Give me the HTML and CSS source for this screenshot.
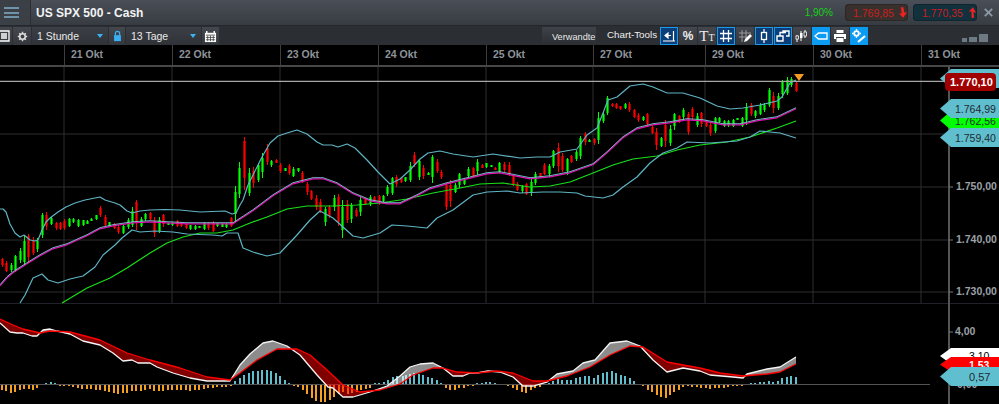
FILE: index.html
```html
<!DOCTYPE html>
<html lang="de">
<head>
<meta charset="utf-8">
<title>US SPX 500 - Cash</title>
<link rel="stylesheet" href="styles.css">
</head>
<body>
<div class="app">
  <header class="topbar">
    <button class="menu" aria-label="Menü"><span></span><span></span><span></span></button>
    <h1 class="title">US SPX 500 - Cash</h1>
    <span class="change">1,90%</span>
    <div class="quote quote-sell">1.769,85
      <svg class="arrow" viewBox="0 0 9 12"><path d="M2 0h3l1 6h3l-4.500 6L0 7l3 0z" fill="#e22"/></svg>
    </div>
    <div class="quote quote-buy">1.770,35
      <svg class="arrow" viewBox="0 0 9 12"><path d="M4 12h3L6 6h3L5.500 0 1 5l3 0z" fill="#e22"/></svg>
    </div>
    <svg class="close" viewBox="0 0 12 12"><path d="M2 2l8 8M10 2l-8 8" stroke="#8b9aa6" stroke-width="2"/></svg>
  </header>

  <nav class="toolbar">
    <button class="tool tool-list">
      <svg viewBox="0 0 12 14"><path d="M-1 2h10v10H-1zM1 5h6M1 7h6M1 9h6" fill="none" stroke="#fff" stroke-width="1.300"/></svg>
    </button>
    <button class="tool tool-gear">
      <svg viewBox="0 0 14 14"><circle cx="7" cy="7" r="3.500" fill="none" stroke="#ddd" stroke-width="2"/><path d="M7 1v2M7 11v2M1 7h2M11 7h2M2.800 2.800l1.400 1.400M9.800 9.800l1.400 1.400M11.200 2.800L9.800 4.200M4.200 9.800l-1.400 1.400" stroke="#ddd" stroke-width="1.800"/></svg>
    </button>
    <div class="select select-time">1 Stunde<i class="caret"></i></div>
    <button class="tool tool-lock">
      <svg viewBox="0 0 12 14"><path d="M3.500 6V4a2.500 2.500 0 015 0v2" fill="none" stroke="#38b0f5" stroke-width="1.400"/><rect x="2" y="6" width="8" height="7" fill="#38b0f5"/></svg>
    </button>
    <div class="select select-range">13 Tage<i class="caret"></i></div>
    <button class="tool tool-cal">
      <svg viewBox="0 0 14 14"><path d="M1 3h12v10H1z" fill="#fff"/><path d="M3 1v3M11 1v3" stroke="#fff" stroke-width="1.500"/><path d="M2 5.500h10M2 8h10M2 10.500h10M4 6v6M7 6v6M10 6v6" stroke="#333" stroke-width=".8"/></svg>
    </button>
    <div class="tab">Verwandte</div>
    <span class="tools-label">Chart-Tools</span>
    <div class="toolset">
      <button class="tool on"><svg viewBox="0 0 14 14"><path d="M1 12h12M11.500 2v10M3 6.500h6M3 6.500l3-2.500v5z" stroke="#fff" fill="#fff" stroke-width="1.200"/></svg></button>
      <button class="tool"><span class="glyph">%</span></button>
      <button class="tool"><span class="glyph glyph-t">T<small>T</small></span></button>
      <button class="tool on"><svg viewBox="0 0 14 14"><path d="M4.500 1v12M9.500 1v12M1 4.500h12M1 9.500h12" stroke="#fff" stroke-width="1.300"/></svg></button>
      <button class="tool"><svg viewBox="0 0 14 14"><path d="M4 1v12M8 1v8M1 4h12M1 8h8" stroke="#999" stroke-width="1"/><path d="M6 13l1-3 5-5 2 2-5 5z" fill="#fff"/></svg></button>
      <button class="tool on"><svg viewBox="0 0 14 14"><path d="M7 0v14" stroke="#fff" stroke-width="1.200"/><rect x="4.500" y="3.500" width="5" height="7" fill="#0b3d78" stroke="#fff" stroke-width="1.300"/></svg></button>
      <button class="tool on"><svg viewBox="0 0 14 14"><path d="M1 7h6v5H1zM4 7V3.500h6M7 4.500V2h6v5h-3" fill="none" stroke="#fff" stroke-width="1.400"/></svg></button>
      <button class="tool"><svg viewBox="0 0 14 14"><path d="M2 13V6M6 12V2M10 9V1" stroke="#fff"/><rect x="1" y="7" width="2.500" height="3" fill="#333" stroke="#fff" stroke-width=".8"/><rect x="5" y="4" width="2.500" height="5" fill="#fff"/><rect x="9" y="3" width="2.500" height="4" fill="#333" stroke="#fff" stroke-width=".8"/></svg></button>
      <button class="tool bright"><svg viewBox="0 0 14 14"><path d="M1 7l3.500-3H13v6H4.500z" fill="none" stroke="#fff" stroke-width="1.300"/></svg></button>
      <button class="tool"><svg viewBox="0 0 14 14"><path d="M3.500 1h7v3h-7zM1 5h12v5h-2V8H3v2H1zM3.500 9h7v4h-7z" fill="#fff"/></svg></button>
      <button class="tool bright"><svg viewBox="0 0 14 14"><circle cx="4.500" cy="4.500" r="2.300" fill="none" stroke="#fff" stroke-width="1.800"/><path d="M4.500 0v1.500M4.500 7.500V9M0 4.500h1.500M7.500 4.500H9" stroke="#fff" stroke-width="1.300"/><path d="M6 13l7-6" stroke="#fff" stroke-width="2.200"/></svg></button>
    </div>
    <div class="winctl"><i class="w1"></i><i class="w2"></i><i class="w3"></i></div>
  </nav>

  <div class="dates">
    <div class="date d0"></div>
    <div class="date d1">21 Okt</div>
    <div class="date d1">22 Okt</div>
    <div class="date d2">23 Okt</div>
    <div class="date d1">24 Okt</div>
    <div class="date d3">25 Okt</div>
    <div class="date d4">27 Okt</div>
    <div class="date d1">29 Okt</div>
    <div class="date d1">30 Okt</div>
    <div class="date d5">31 Okt</div>
  </div>

  <main class="chart">
    <svg class="canvas" viewBox="0 65 999 339" width="999" height="339">
      <g class="grid">
        <path d="M64 67V303M172 67V303M280 67V303M378 67V303M486 67V303M593 67V303M705 67V303M813 67V303M921 67V303"/>
        <path d="M0 134H949M0 187H949M0 240H949M0 292H949"/>
      </g>
      <path class="rule-top" d="M0 66H999"/>
      <path class="rule-mid" d="M0 303.500H999"/>
      <path class="rule-axis" d="M949 66V404"/>
      <path class="ticks" d="M949 187h4M949 240h4M949 292h4M949 332h4"/>
      <g id="candles"></g>
      <g id="bands"></g>
      <path class="last-line" d="M0 81.300H945"/>
      <polygon class="marker" points="794,74 804,74 799,81"/>
      <path class="zero-line" d="M0 384.500H930"/>
      <g id="hist"></g>
      <g id="macd"></g>
      <text class="axis-text" x="956" y="190">1.750,00</text>
      <text class="axis-text" x="956" y="243">1.740,00</text>
      <text class="axis-text" x="956" y="295">1.730,00</text>
      <text class="axis-text" x="955" y="335">4,00</text>
      <text class="axis-text" x="957" y="388">0,00</text>
    </svg>
    <div class="tag tag-blue t-top"></div>
    <div class="tag tag-price">1.770,10</div>
    <div class="tag tag-green t-ma">1.762,56</div>
    <div class="tag tag-blue t-up">1.764,99</div>
    <div class="tag tag-blue t-low">1.759,40</div>
    <div class="tag tag-white t-macd">3,10</div>
    <div class="tag tag-red t-sig">1.53</div>
    <div class="tag tag-blue t-hist">0,57</div>
  </main>
</div>
<script src="chart.js"></script>
</body>
</html>
```
FILE: styles.css
```css
* { box-sizing: border-box; }
html, body { margin: 0; padding: 0; width: 999px; height: 404px; overflow: hidden; background: #000; }
body { font-family: "Liberation Sans", Arial, sans-serif; color: #fff; }
.app { display: flex; flex-direction: column; width: 999px; height: 404px; }
button { margin: 0; padding: 0; border: 0; font: inherit; color: inherit; background: none; }

.topbar { display: flex; align-items: center; height: 26px; flex: none; background: linear-gradient(#4a4f57, #373b42); border-bottom: 1px solid #24272b; }
.menu { display: flex; flex-direction: column; justify-content: center; gap: 2.500px; width: 31px; height: 25px; padding-left: 4px; background: #3b4047; border-right: 1px solid #2a2d32; flex: none; }
.menu span { display: block; width: 15px; height: 2px; background: #6f93a8; }
.title { margin: 0 0 0 5px; font-size: 12px; font-weight: bold; color: #f2f3f4; flex: 1; }
.change { color: #17d117; font-size: 10px; margin-right: 12px; }
.quote { display: flex; align-items: center; gap: 5px; width: 63px; height: 17px; padding-left: 8px; margin-right: 5px; border-radius: 4px; font-size: 10.500px; color: #c82020; }
.quote-sell { background: #38302c; box-shadow: inset 0 0 0 1px #2c2724; }
.quote-buy { width: 64px; padding-left: 9px; background: #13303d; box-shadow: inset 0 0 0 1px #10262f; margin-right: 6px; }
.arrow { width: 8px; height: 11px; }
.close { width: 11px; height: 11px; margin-right: 5px; }

.toolbar { display: flex; align-items: stretch; height: 19px; padding-top: 1px; flex: none; background: #2b2e33; }
.tool { display: flex; align-items: center; justify-content: center; width: 18px; background: linear-gradient(#44484e, #33363b); flex: none; }
.tool svg { width: 14px; height: 14px; }
.tool-list { width: 12px; margin-right: 1px; }
.tool-list svg { width: 12px; }
.tool-gear { margin-right: 1px; }
.tool-gear svg { width: 11px; height: 11px; }
.tool-lock { width: 16px; margin: 0 1px; }
.tool-lock svg { width: 11px; height: 12px; }
.tool-cal { margin-left: 1px; width: 17px; }
.tool-cal svg { width: 13px; height: 13px; }
.select { position: relative; display: flex; align-items: center; padding-left: 5px; font-size: 10.500px; color: #e8e9ea; background: linear-gradient(#3c4046, #2f3237); flex: none; }
.select-time { width: 76px; }
.select-range { width: 75px; }
.caret { position: absolute; right: 5px; top: 7px; width: 0; height: 0; border: 3px solid transparent; border-bottom: 0; border-top: 4px solid #3cb2f2; }
.tab { width: 54px; margin-left: 323px; padding: 5px 0 0 10px; font-size: 9.200px; color: #e8e9ea; white-space: nowrap; background: linear-gradient(#3f4349, #2a2d31); flex: none; }
.tools-label { width: 65px; padding: 2px 0 0 11px; font-size: 9.800px; white-space: nowrap; color: #f0f0f0; flex: none; }
.toolset { display: flex; gap: 1px; margin-left: -1px; flex: none; }
.tool.on { background: #0b3d78; box-shadow: inset 0 0 0 1px #1a9ae8; }
.tool.bright { background: #0c9bf2; }
.glyph { font-size: 12px; font-weight: bold; color: #eee; }
.glyph-t { font-family: "Liberation Serif", serif; font-size: 15px; font-weight: normal; }
.glyph-t small { font-size: 10px; }
.winctl { display: flex; align-items: flex-end; gap: 2px; margin-left: 94px; padding-bottom: 3px; }
.winctl i { display: block; background: #6d7a84; }
.w1 { width: 5px; height: 4px; }
.w2 { width: 8px; height: 5px; }
.w3 { width: 9px; height: 8px; background: #7c8a95; }

.dates { display: flex; height: 20px; flex: none; background: #000; }
.date { height: 20px; padding: 3px 0 0 6px; border-left: 1px solid #3e3e3e; font-size: 10.500px; font-weight: bold; color: #8e939a; white-space: nowrap; flex: none; }
.d0 { width: 64px; border-left: 0; }
.d1 { width: 108px; }
.d2 { width: 98px; }
.d3 { width: 107px; }
.d4 { width: 112px; }
.d5 { width: 78px; }

.chart { position: relative; flex: 1; background: #000; overflow: hidden; }
.canvas { display: block; }
.grid path { stroke: #2e2e2e; stroke-width: 1; fill: none; }
.rule-top { stroke: #474747; stroke-width: 2; }
.rule-mid { stroke: #1f2329; stroke-width: 1; }
.rule-axis { stroke: #555; stroke-width: 2; }
.ticks { stroke: #777; stroke-width: 1; }
.last-line { stroke: #a8a8a8; stroke-width: 1.200; }
.marker { fill: #f59a23; }
.zero-line { stroke: #555; stroke-width: 1; }
.axis-text { font-family: "Liberation Sans", Arial, sans-serif; font-size: 10.500px; font-weight: bold; fill: #9ca1a8; }

.tag { position: absolute; display: flex; align-items: center; padding-left: 15px; font-size: 10.500px; color: #1f2a30; left: 940px; width: 59px; clip-path: polygon(0 50%, 11px 0, 100% 0, 100% 100%, 11px 100%); }
.tag-blue { background: #5fbfce; }
.tag-green { background: #00ff00; }
.tag-white { background: #fff; color: #000; }
.tag-red { background: #f00; color: #fff; font-weight: bold; padding-left: 29px; }
.t-top { top: 4px; height: 19px; }
.tag-price { left: 945px; width: 51px; top: 8px; height: 18px; padding: 0 0 0 5px; border-radius: 4px; background: #a10000; color: #fff; font-size: 11px; font-weight: bold; clip-path: none; }
.t-up { top: 34px; height: 19px; }
.t-ma { top: 46px; height: 19px; }
.t-low { top: 63px; height: 19px; }
.t-macd { top: 283px; height: 16px; padding-left: 29px; }
.t-sig { top: 292px; height: 15px; }
.t-hist { top: 302px; height: 19px; padding-left: 29px; font-size: 11px; }
```
FILE: chart.js
```javascript
var NS = 'http://www.w3.org/2000/svg';
function el(parent, name, attrs) {
  var n = document.createElementNS(NS, name);
  for (var k in attrs) n.setAttribute(k, attrs[k]);
  parent.appendChild(n);
  return n;
}
function pts(a, dy) {
  var s = [];
  for (var i = 0; i < a.length; i += 2) s.push(a[i] + ',' + (a[i + 1] + (dy || 0)));
  return s.join(' ');
}

/* x top bottom colour */
var candles = 'r2 258 267;r6 261 272;g11 263 272;g15 255 272;g20 248 263;g24 236 265;r28 234 263;r33 237 255;g37 238 252;g42 213 238;r46 212 230;g51 217 225;r56 222 230;r60 222 230;r64 219 230;g69 218 227;g73 218 223;g78 219 227;g83 220 226;g87 220 224;g91 218 221;g96 215 220;r100 206 217;r105 215 226;g109 222 227;r114 223 229;r118 225 234;g123 225 234;g128 218 229;g132 207 227;r136 200 230;g141 217 227;g145 213 221;r150 212 220;r154 217 237;g159 217 233;r163 214 227;g168 223 225;g172 222 226;r177 220 227;r181 222 227;r186 223 229;g190 225 230;g195 225 230;g199 226 228;g204 222 230;r208 222 230;r213 221 232;g217 223 227;g222 223 227;g226 223 228;r231 217 227;g235 186 222;g239 162 198;r244 137 190;g249 168 196;r253 167 188;g258 163 182;g262 153 178;r267 144 165;g271 160 167;r276 159 163;r280 163 173;g285 168 171;r289 164 175;g293 167 177;g298 168 172;r302 171 183;r307 182 195;r311 190 200;r316 195 210;r320 199 213;g325 207 226;r329 205 218;g334 195 211;r338 194 226;g342 200 238;r347 200 223;g351 203 223;r356 208 217;g360 196 216;r365 198 205;g370 195 206;r374 196 202;r379 195 205;g383 195 202;g387 185 196;g392 177 195;r396 175 187;r401 177 183;g405 177 182;g410 162 182;r414 152 167;g419 159 180;r423 165 179;g428 172 175;g432 155 183;r437 159 173;r441 170 179;r446 183 210;r450 180 207;g455 183 193;g459 173 188;g464 178 185;g468 167 179;r473 167 177;g477 159 175;r482 164 168;g486 163 168;g491 165 167;r495 167 170;g499 162 173;r504 162 172;r509 162 176;r513 175 186;r517 182 191;g522 185 193;r526 183 195;g531 179 196;g535 172 185;r540 173 178;r544 163 175;g549 164 177;g553 150 168;r558 143 172;r562 153 172;g567 158 175;r571 155 163;g576 150 161;g580 136 159;r585 132 145;g589 139 142;r594 138 145;g598 112 144;g603 112 123;g607 96 115;r612 103 107;r616 103 109;r620 106 110;g625 103 109;r629 102 112;r634 109 118;r638 113 122;g643 116 121;r647 113 127;r652 125 134;r656 128 150;g661 137 147;r665 120 147;g670 125 146;g674 113 130;r679 115 123;g683 108 120;r688 112 135;r692 107 120;g697 113 127;r701 112 127;r706 120 127;r710 123 136;g715 117 133;g719 117 123;g724 120 127;g728 120 127;g733 119 127;g737 118 120;g742 117 127;g746 103 125;r751 103 116;g755 110 118;g760 103 115;g764 103 112;g769 88 107;r773 92 113;g778 93 110;g782 80 98;g787 77 95;g791 77 87;r796 82 92';

var cg = document.getElementById('candles');
candles.split(';').forEach(function (c, i) {
  var p = c.slice(1).split(' ').map(Number), col = c[0] === 'r' ? '#f00' : '#0f0';
  var x = p[0], t = p[1], b = p[2], h = b - t;
  el(cg, 'rect', { x: x, y: t, width: 1, height: h, fill: col });
  var it = Math.round(h * (i % 3 === 0 ? 0.08 : 0.18)), ib = Math.round(h * (i % 2 ? 0.12 : 0.22));
  el(cg, 'rect', { x: x - 0.6, y: t + it, width: 2.2, height: Math.max(2, h - it - ib), fill: col });
});

var upper = [0,209,3,209,6,212,10,224,15,233,20,237,24,235,30,240,35,241,38,240,42,230,46,222,50,218,58,212,66,207,75,203,85,200,100,197,105,200,115,203,120,205,127,211,132,213,140,211,150,210,165,209.5,180,210,200,212,225,211,232,214,236,213,240,205,243,200,248,185,253,175,262,157,270,143,278,136,287,133,297,130,307,134,317,142,323,145,332,145,338,147,347,144,355,148,367,160,378,172,390,184,400,179,410,170,420,159,428,153,440,151,453,154,473,157,493,154,520,158,537,157,550,157,560,152,577,149,587,135,597,128,603,113,608,100,617,97,630,86,643,84,653,87,667,93,683,93,700,98,717,106,730,109,743,108,760,105,777,101,782,97,790,83,796,80];
var lower = [20,303,25,295,33,278,42,274,48,280,58,283,70,279,83,276,95,267,103,255,115,245,122,238,132,230,140,232,155,231,173,232,187,234,213,235,222,236,227,233,238,233,243,248,253,252,267,256,280,253,297,235,310,220,320,211,333,218,343,227,353,236,363,238,380,233,392,225,407,226,427,228,437,218,453,210,473,195,487,192,507,191,520,193,543,192,560,192,577,193,585,196,603,198,613,195,623,187,637,177,650,163,663,153,677,148,687,142,710,143,737,141,750,137,760,131,770,132,780,133,796,138];
var mid = [0,285,7,277,13,272,27,263,40,255,53,248,67,244,87,235,100,228,113,225,133,222,150,221,167,222,187,223,207,223,233,223,253,210,273,195,293,183,313,178,323,178,337,183,353,193,370,200,387,203,400,203,417,195,430,188,447,183,467,178,487,173,500,172,510,174,530,178,550,176,570,172,593,164,607,152,623,137,637,128,653,124,670,122,687,119,703,120,723,124,740,124,757,120,777,117,796,108];
var ma = [62,303,67,300,87,288,110,278,127,268,150,253,167,243,183,237,200,233,217,233,233,230,250,223,267,217,287,209,307,206,333,206,357,205,380,203,407,199,433,193,460,188,480,184,503,183,530,187,550,186,570,182,593,173,613,165,633,159,657,156,677,150,700,145,727,142,750,137,777,128,796,121];

var bg = document.getElementById('bands');
function line(g, a, col, w, dy) {
  el(g, 'polyline', { points: pts(a, dy), fill: 'none', stroke: col, 'stroke-width': w, 'stroke-linejoin': 'round' });
}
line(bg, ma, '#18e018', 1.2);
line(bg, upper, '#5fb4c4', 1.2);
line(bg, lower, '#5fb4c4', 1.2);
line(bg, mid, '#e010b0', 1.2, 0.8);
line(bg, mid, '#86c5d8', 0.9, -0.3);

/* signed histogram: x height */
var hist = [1,-5,5,-6,10,-8,14,-7,19,-5,23,-4,28,-4,32,-5,36,-3,45,1,50,2,54,1,59,-1,63,-1,68,-1,72,-2,77,-3,81,-4,86,-4,90,-4,95,-5,99,-5,104,-6,108,-7,113,-8,117,-9,122,-8,126,-8,131,-6,135,-6,140,-6,144,-5,149,-4,153,-6,158,-6,162,-6,167,-5,171,-5,176,-5,180,-5,185,-5,189,-6,194,-5,198,-5,203,-4,207,-3,212,-3,216,-2,221,-2,225,-2,230,-1,234,3,239,6,243,9,248,11,252,13,257,13,261,14,266,14,270,13,275,11,279,8,284,4,288,1,293,-1,297,-2,302,-5,306,-9,311,-13,315,-16,320,-17,324,-17,329,-15,333,-12,338,-9,342,-7,347,-9,351,-8,356,-7,360,-5,365,-4,369,-3,374,1,378,1,383,2,387,4,392,7,396,8,402,8,405,9,409,10,413,11,418,10,422,9,427,7,431,6,436,4,440,1,445,-3,449,-5,454,-5,458,-3,463,-3,467,-1,472,-1,476,1,481,1,485,2,489,2,494,1,507,-1,512,-3,516,-5,521,-7,525,-8,530,-5,534,-3,539,-2,548,1,552,3,557,5,561,4,566,4,570,4,575,6,579,7,584,8,588,8,593,6,597,9,602,11,606,12,611,13,615,11,620,9,624,8,629,6,633,3,642,-1,647,-5,651,-7,656,-10,660,-12,665,-13,669,-10,673,-7,678,-5,682,-2,687,-1,691,-2,696,-2,700,-3,705,-3,709,-4,714,-3,718,-3,723,-3,727,-2,732,-1,736,-1,741,-1,750,1,754,1,759,2,763,2,768,3,772,2,777,3,781,6,786,7,790,8,795,7];
var hg = document.getElementById('hist');
for (var i = 0; i < hist.length; i += 2) {
  var h = hist[i + 1];
  el(hg, 'rect', { x: hist[i], y: h > 0 ? 384 - h : 385, width: 2, height: Math.abs(h), fill: h > 0 ? '#5fbfce' : '#f5a020' });
}

var white = [0,323,10,332,17,333,23,333,32,336,37,336,43,330,50,329,57,331,70,334,83,341,100,345,113,353,123,361,132,360,138,363,150,363,157,367,173,373,190,378,207,381,230,381,240,365,250,354,263,343,273,341,287,346,300,355,317,375,328,387,333,388,343,397,353,397,370,392,387,386,400,376,410,367,420,364,433,363,443,368,453,376,463,376,470,373,477,373,488,371,500,372,513,377,523,386,533,386,547,382,557,374,573,371,583,363,595,360,610,343,627,341,640,346,653,360,667,372,683,368,700,371,710,375,733,377,743,378,747,374,767,369,780,367,796,357];
var red = [0,319,13,325,23,329,40,333,50,331,70,332,100,340,127,353,150,360,180,368,207,377,230,380,240,373,257,360,277,349,297,349,310,355,327,370,343,385,360,392,380,390,400,384,413,375,433,368,443,368,457,372,477,373,497,371,513,373,533,381,547,381,567,376,590,367,610,355,630,346,643,347,667,362,683,365,700,368,720,373,743,376,767,374,780,372,796,364];

var mg = document.getElementById('macd');
var defs = el(mg, 'defs', {});
function above(id, a) {
  var c = el(defs, 'clipPath', { id: id });
  el(c, 'polygon', { points: pts(a) + ' 796,300 0,300' });
}
function below(a) { return pts(a) + ' 796,404 0,404'; }
above('above-red', red);
above('above-white', white);
el(mg, 'polygon', { points: below(white), fill: '#fff', 'fill-opacity': 0.55, 'clip-path': 'url(#above-red)' });
el(mg, 'polygon', { points: below(red), fill: '#f00', 'fill-opacity': 0.5, 'clip-path': 'url(#above-white)' });
line(mg, white, '#f4f4f4', 1.3);
line(mg, red, '#f00', 1.3);
```
